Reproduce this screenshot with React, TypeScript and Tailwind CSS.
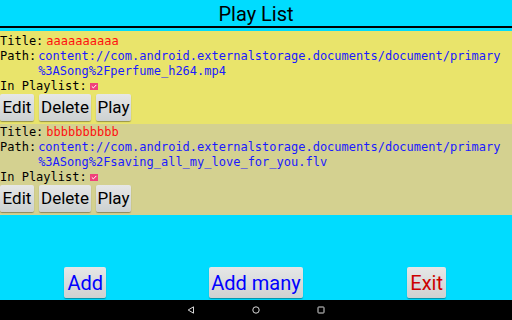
import React from "react";

const mono = { fontFamily: '"DejaVu Sans Mono", monospace' } as React.CSSProperties;
const roboto = { fontFamily: 'Roboto, "Liberation Sans", sans-serif' } as React.CSSProperties;

function Btn({ label, color = "text-black", size = "text-[17px]", cls = "" }: { label: string; color?: string; size?: string; cls?: string }) {
  return (
    <div
      className={`flex items-center justify-center rounded-[2px] bg-gradient-to-b from-[#e6e7e7] to-[#cdd1d1] shadow-[0_1px_1px_rgba(0,0,0,0.35)] ${color} ${size} ${cls}`}
      style={roboto}
    >
      {label}
    </div>
  );
}

function Check() {
  return (
    <div className="w-[8px] h-[7px] bg-[#f0407a] flex items-center justify-center ml-[3px]">
      <svg width="6" height="5" viewBox="0 0 6 5">
        <path d="M0.8 2.4 L2.4 3.9 L5.3 0.9" stroke="white" strokeWidth="1" fill="none" />
      </svg>
    </div>
  );
}

function Item({ title, line2, bg, pt, mb }: { title: string; line2: string; bg: string; pt: string; mb: string }) {
  return (
    <div className={`${bg} ${pt} flex flex-col`}>
      <div className="flex text-[12px] leading-[16px] h-[16px]" style={mono}>
        <span className="text-black">Title:</span>
        <span className="text-[#ff1010] ml-[3px]">{title}</span>
      </div>
      <div className="flex text-[12px] leading-[15px]" style={mono}>
        <span className="text-black">Path:</span>
        <div className="text-[#1a1aff] ml-[2px] flex flex-col">
          <span>content://com.android.externalstorage.documents/document/primary</span>
          <span>{line2}</span>
        </div>
      </div>
      <div className="flex items-center text-[12px] leading-[15px] h-[15px]" style={mono}>
        <span className="text-black">In Playlist:</span>
        <Check />
      </div>
      <div className={`flex gap-[5px] h-[27px] ${mb}`}>
        <Btn label="Edit" cls="w-[34px]" />
        <Btn label="Delete" cls="w-[52px]" />
        <Btn label="Play" cls="w-[35px]" />
      </div>
    </div>
  );
}

export default function App() {
  return (
    <div className="w-[512px] h-[320px] bg-[#00dcff] flex flex-col overflow-hidden">
      <div className="h-[26px] flex items-center justify-center text-[20px] text-black pt-[1px]" style={roboto}>
        Play List
      </div>
      <div className="h-[2px] bg-black" />
      <div className="h-[3px]" />
      <Item title="aaaaaaaaaa" line2="%3ASong%2Fperfume_h264.mp4" bg="bg-[#e9e46b]" pt="pt-[2px]" mb="mb-[3px]" />
      <Item title="bbbbbbbbbb" line2="%3ASong%2Fsaving_all_my_love_for_you.flv" bg="bg-[#d4d190]" pt="pt-0" mb="mb-[3px]" />
      <div className="flex-1" />
      <div className="grid grid-cols-3 h-[31px] mb-[2px]">
        <div className="flex justify-center">
          <Btn label="Add" color="text-[#0000ff]" size="text-[20px]" cls="w-[42px]" />
        </div>
        <div className="flex justify-center">
          <Btn label="Add many" color="text-[#0000ff]" size="text-[20px]" cls="w-[94px]" />
        </div>
        <div className="flex justify-center">
          <Btn label="Exit" color="text-[#cc0000]" size="text-[20px]" cls="w-[39px]" />
        </div>
      </div>
      <div className="h-[20px] bg-black flex items-center justify-center gap-[57px]">
        <svg width="8" height="8" viewBox="0 0 8 8">
          <path d="M6.5 0.8 L6.5 7.2 L1.2 4 Z" stroke="#d8d8d8" strokeWidth="1" fill="none" strokeLinejoin="round" />
        </svg>
        <svg width="8" height="8" viewBox="0 0 8 8">
          <circle cx="4" cy="4" r="3.2" stroke="#d8d8d8" strokeWidth="1" fill="none" />
        </svg>
        <svg width="8" height="8" viewBox="0 0 8 8">
          <rect x="1" y="1" width="6" height="6" rx="0.6" stroke="#d8d8d8" strokeWidth="1" fill="none" />
        </svg>
      </div>
    </div>
  );
}
